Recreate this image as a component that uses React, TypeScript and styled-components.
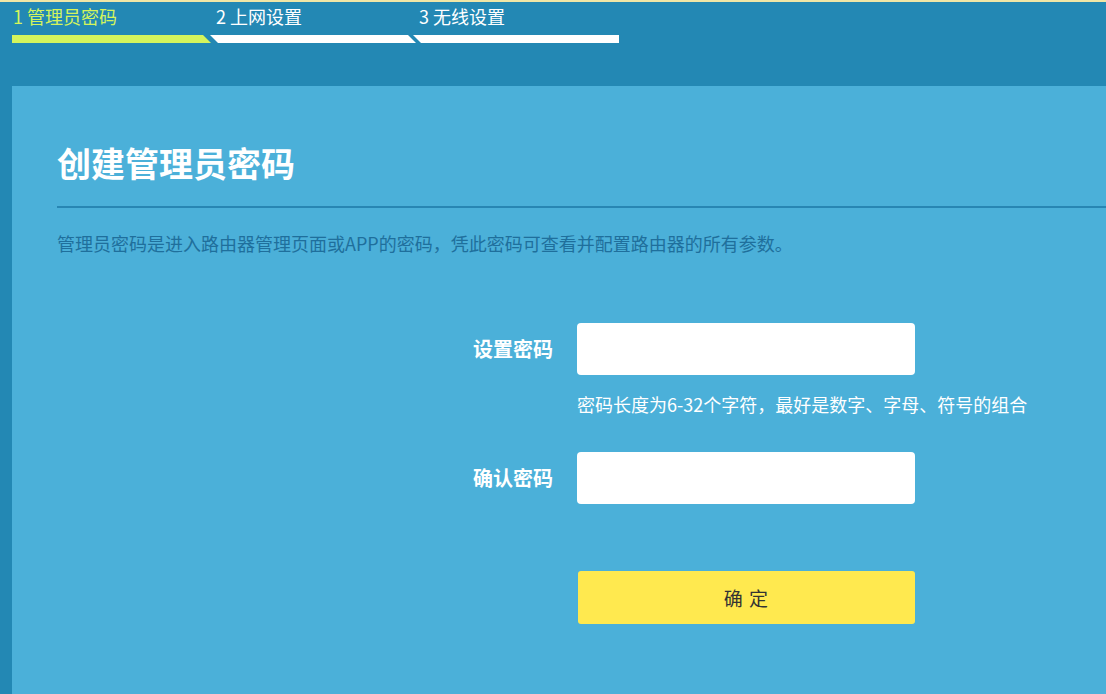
import React from "react";
import styled, { createGlobalStyle } from "styled-components";

const GlobalStyle = createGlobalStyle`
    html, body {
        margin: 0;
        padding: 0;
        background: #2388b4;
        font-family: "Noto Sans CJK SC", "Noto Sans", sans-serif;
    }
`;

const Page = styled.div`
    display: flex;
    flex-direction: column;
    min-height: 100vh;
    border-top: 2px solid #f0e6a6;
    box-sizing: border-box;
`;

const Header = styled.div`
    display: flex;
    flex-direction: row;
    height: 84px;
    padding-left: 12px;
`;

const Step = styled.div`
    display: flex;
    flex-direction: column;
    width: 203px;
`;

const StepLabel = styled.div<{ $active?: boolean }>`
    height: 28px;
    padding-left: 1px;
    font-size: 18px;
    line-height: 28px;
    color: ${p => (p.$active ? "#d4f45c" : "#ffffff")};
    white-space: nowrap;
`;

type BarPos = "first" | "middle" | "last";

const clips: Record<BarPos, string> = {
    first: "polygon(0 0, calc(100% - 8px) 0, 100% 100%, 0 100%)",
    middle: "polygon(0 0, calc(100% - 8px) 0, 100% 100%, 8px 100%)",
    last: "polygon(0 0, 100% 0, 100% 100%, 8px 100%)",
};

const Bar = styled.div<{ $pos: BarPos; $active?: boolean }>`
    height: 8px;
    margin-top: 5px;
    margin-left: ${p => (p.$pos === "first" ? "0" : "-5px")};
    margin-right: ${p => (p.$pos === "first" ? "4px" : "2px")};
    background: ${p => (p.$active ? "#d4f45c" : "#ffffff")};
    clip-path: ${p => clips[p.$pos]};
`;

const Panel = styled.div`
    flex: 1;
    margin-left: 12px;
    padding: 57px 0 60px 45px;
    background: #4bb0d9;
`;

const Title = styled.h1`
    margin: 0;
    font-size: 34px;
    line-height: 40px;
    font-weight: 700;
    color: #ffffff;
`;

const Divider = styled.div`
    height: 2px;
    margin-top: 23px;
    background: #2886b3;
`;

const Description = styled.p`
    margin: 23px 0 0;
    font-size: 18px;
    line-height: 24px;
    color: #1f6f9c;
`;

const Form = styled.div`
    display: grid;
    grid-template-columns: 496px 338px;
    column-gap: 24px;
    margin-top: 68px;
`;

const Label = styled.label`
    height: 52px;
    line-height: 52px;
    text-align: right;
    font-size: 20px;
    font-weight: 700;
    color: #ffffff;
`;

const Field = styled.div<{ $spacing: number }>`
    display: flex;
    flex-direction: column;
    margin-bottom: ${p => p.$spacing}px;
`;

const Input = styled.input`
    height: 52px;
    box-sizing: border-box;
    border: none;
    border-radius: 4px;
    background: #ffffff;
    padding: 0 12px;
    font-size: 18px;
    outline: none;
`;

const Hint = styled.div`
    margin-top: 17px;
    font-size: 18px;
    line-height: 24px;
    color: #ffffff;
    white-space: nowrap;
`;

const Button = styled.button`
    grid-column: 2;
    height: 53px;
    margin-left: 1px;
    border: none;
    border-radius: 3px;
    background: #ffe94f;
    color: #333333;
    font-family: inherit;
    font-size: 19px;
    letter-spacing: 1px;
    cursor: pointer;
`;

const steps = [
    { label: "1 管理员密码", active: true, pos: "first" as BarPos },
    { label: "2 上网设置", active: false, pos: "middle" as BarPos },
    { label: "3 无线设置", active: false, pos: "last" as BarPos },
];

export default function App() {
    return (
        <>
            <GlobalStyle />
            <Page>
                <Header>
                    {steps.map(s => (
                        <Step key={s.label}>
                            <StepLabel $active={s.active}>{s.label}</StepLabel>
                            <Bar $pos={s.pos} $active={s.active} />
                        </Step>
                    ))}
                </Header>
                <Panel>
                    <Title>创建管理员密码</Title>
                    <Divider />
                    <Description>
                        管理员密码是进入路由器管理页面或APP的密码，凭此密码可查看并配置路由器的所有参数。
                    </Description>
                    <Form>
                        <Label>设置密码</Label>
                        <Field $spacing={36}>
                            <Input type="password" />
                            <Hint>密码长度为6-32个字符，最好是数字、字母、符号的组合</Hint>
                        </Field>
                        <Label>确认密码</Label>
                        <Field $spacing={67}>
                            <Input type="password" />
                        </Field>
                        <Button>确 定</Button>
                    </Form>
                </Panel>
            </Page>
        </>
    );
}
